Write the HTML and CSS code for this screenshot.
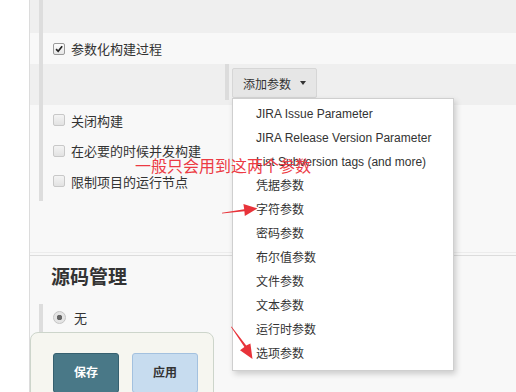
FILE: index.html
```html
<!DOCTYPE html>
<html lang="zh">
<head>
<meta charset="utf-8">
<link rel="stylesheet" href="styles.css">
</head>
<body>
<div class="page">
  <div class="sec">
    <div class="band dark top"></div>
    <div class="band light checkrow">
      <span class="cb checked"><svg viewBox="0 0 12 12" width="12" height="12"><path d="M2.5 6.2 L5 8.8 L9.8 2.8" fill="none" stroke="#222" stroke-width="2"/></svg></span>
      <span>参数化构建过程</span>
    </div>
    <div class="band dark addbar">
      <div class="addwrap">
        <button class="addbtn">添加参数 <span class="caret"></span></button>
      </div>
    </div>
    <div class="band light opts">
      <div class="opt"><span class="cb"></span><span>关闭构建</span></div>
      <div class="opt"><span class="cb"></span><span>在必要的时候并发构建</span></div>
      <div class="opt"><span class="cb"></span><span>限制项目的运行节点</span></div>
    </div>
  </div>
  <div class="gap"></div>
  <div class="divider"></div>
  <h2 class="heading">源码管理</h2>
  <div class="scm">
    <div class="radio-row"><span class="radio"></span><span>无</span></div>
  </div>
</div>

<ul class="menu">
  <li>JIRA Issue Parameter</li>
  <li>JIRA Release Version Parameter</li>
  <li>List Subversion tags (and more)</li>
  <li>凭据参数</li>
  <li>字符参数</li>
  <li>密码参数</li>
  <li>布尔值参数</li>
  <li>文件参数</li>
  <li>文本参数</li>
  <li>运行时参数</li>
  <li>选项参数</li>
</ul>

<div class="note">一般只会用到这两个参数</div>

<svg class="arrows" width="516" height="392" viewBox="0 0 516 392">
  <polygon fill="#e8333a" points="222,212.8 244.2,209.2 243.4,204 257.5,208.4 244.8,216 244.4,211.2 222,213.6"/>
  <polygon fill="#e8333a" points="231.5,326.5 246.2,345.6 250.4,343.6 252.5,359 240,350.2 244.4,347 231,327"/>
</svg>

<div class="bottom">
  <button class="btn save">保存</button>
  <button class="btn apply">应用</button>
</div>
</body>
</html>
```

FILE: styles.css
```css
html, body {
  margin: 0;
  padding: 0;
}
body {
  width: 516px;
  height: 392px;
  overflow: hidden;
  background: #ffffff;
  font-family: "Liberation Sans", "Noto Sans CJK SC", sans-serif;
  font-size: 13px;
  color: #333;
  position: relative;
}
.page {
  margin-left: 29px;
  border-left: 1px solid #dcdcdc;
  background: #f8f8f8;
  height: 392px;
  overflow: hidden;
}
.band {
  background-repeat: no-repeat;
  background-image: linear-gradient(#dddddd, #dddddd);
  background-position: 9px 0;
  background-size: 4px 100%;
  padding-left: 23px;
}
.sec .band.dark { background-color: #efefef; }
.sec .band.light { background-color: #f8f8f8; }
.top { height: 33px; }
.checkrow {
  height: 31px;
  display: flex;
  align-items: center;
  gap: 6px;
}
.cb {
  width: 10px;
  height: 10px;
  border: 1px solid #c8c8c8;
  border-radius: 2px;
  background: linear-gradient(#f4f4f4, #e2e2e2);
  display: inline-flex;
  align-items: center;
  justify-content: center;
  flex: none;
}
.cb.checked {
  border-color: #9a9a9a;
  background: linear-gradient(#fdfdfd, #e6e6e6);
}
.cb svg { display: block; width: 10px; height: 10px; }
.addbar {
  height: 41px;
}
.addwrap {
  margin-left: 172px;
  border-left: 4px solid #dcdcdc;
  padding: 4px 0 0 3px;
  height: 32px;
}
.addbtn {
  width: 85px;
  height: 30px;
  margin: 0;
  border: 1px solid #d6d6d6;
  border-radius: 2px;
  background: #e6e6e6;
  font-family: "Liberation Sans", "Noto Sans CJK SC", sans-serif;
  font-size: 12px;
  color: #333;
  display: flex;
  align-items: center;
  gap: 8px;
  justify-content: flex-start;
  padding: 0 0 0 10px;
}
.caret {
  width: 0;
  height: 0;
  border-left: 3.5px solid transparent;
  border-right: 3.5px solid transparent;
  border-top: 4px solid #333;
  margin-left: 1px;
}
.opts {
  height: 96px;
}
.opt {
  height: 30.5px;
  display: flex;
  align-items: center;
  gap: 6px;
}
.gap { height: 54px; }
.divider {
  height: 1px;
  background: #dcdcdc;
  box-shadow: 0 -3px 0 #ececec;
}
.heading {
  margin: 0;
  height: 40px;
  line-height: 40px;
  padding-left: 21px;
  font-family: "Noto Sans CJK SC", sans-serif;
  font-size: 19px;
  font-weight: bold;
  color: #333;
}
.scm {
  margin-left: 9px;
  margin-top: 8px;
  border-left: 4px solid #dddddd;
  height: 100px;
  padding-left: 10px;
}
.radio-row {
  height: 27px;
  display: flex;
  align-items: center;
  gap: 8px;
  font-family: "Noto Sans CJK SC", sans-serif;
}
.radio {
  width: 11px;
  height: 11px;
  border-radius: 50%;
  border: 1px solid #c4c4c4;
  background: radial-gradient(circle, #666 0 2.5px, #e4e4e4 3px);
  flex: none;
}
.menu {
  position: absolute;
  left: 232px;
  top: 98px;
  width: 220px;
  margin: 0;
  padding: 3px 0 4px 0;
  list-style: none;
  background: #fff;
  border: 1px solid #cfcfcf;
  box-shadow: 2px 3px 6px rgba(0, 0, 0, 0.18);
  font-size: 12px;
  color: #333;
}
.menu li {
  height: 24px;
  line-height: 24px;
  padding-left: 23px;
  white-space: nowrap;
}
.note {
  position: absolute;
  left: 135px;
  top: 154px;
  font-family: "Noto Sans CJK SC", sans-serif;
  font-size: 16px;
  line-height: 22px;
  color: #ec3a43;
  white-space: nowrap;
}
.arrows {
  position: absolute;
  left: 0;
  top: 0;
  pointer-events: none;
}
.bottom {
  position: absolute;
  left: 30px;
  top: 332px;
  width: 184px;
  height: 80px;
  border: 1px solid #cdd5cb;
  border-radius: 8px;
  background: #f6f6f0;
  box-sizing: border-box;
  display: flex;
  gap: 13px;
  padding: 20px 0 0 22px;
}
.btn {
  width: 66px;
  height: 40px;
  margin: 0;
  border-radius: 3px;
  font-family: "Noto Sans CJK SC", sans-serif;
  font-size: 12px;
  font-weight: bold;
  padding: 0 0 4px 0;
}
.save {
  background: #497887;
  border: 1px solid #36606f;
  color: #fff;
}
.apply {
  background: #c7dcef;
  border: 1px solid #a3c1df;
  color: #333;
}
```
